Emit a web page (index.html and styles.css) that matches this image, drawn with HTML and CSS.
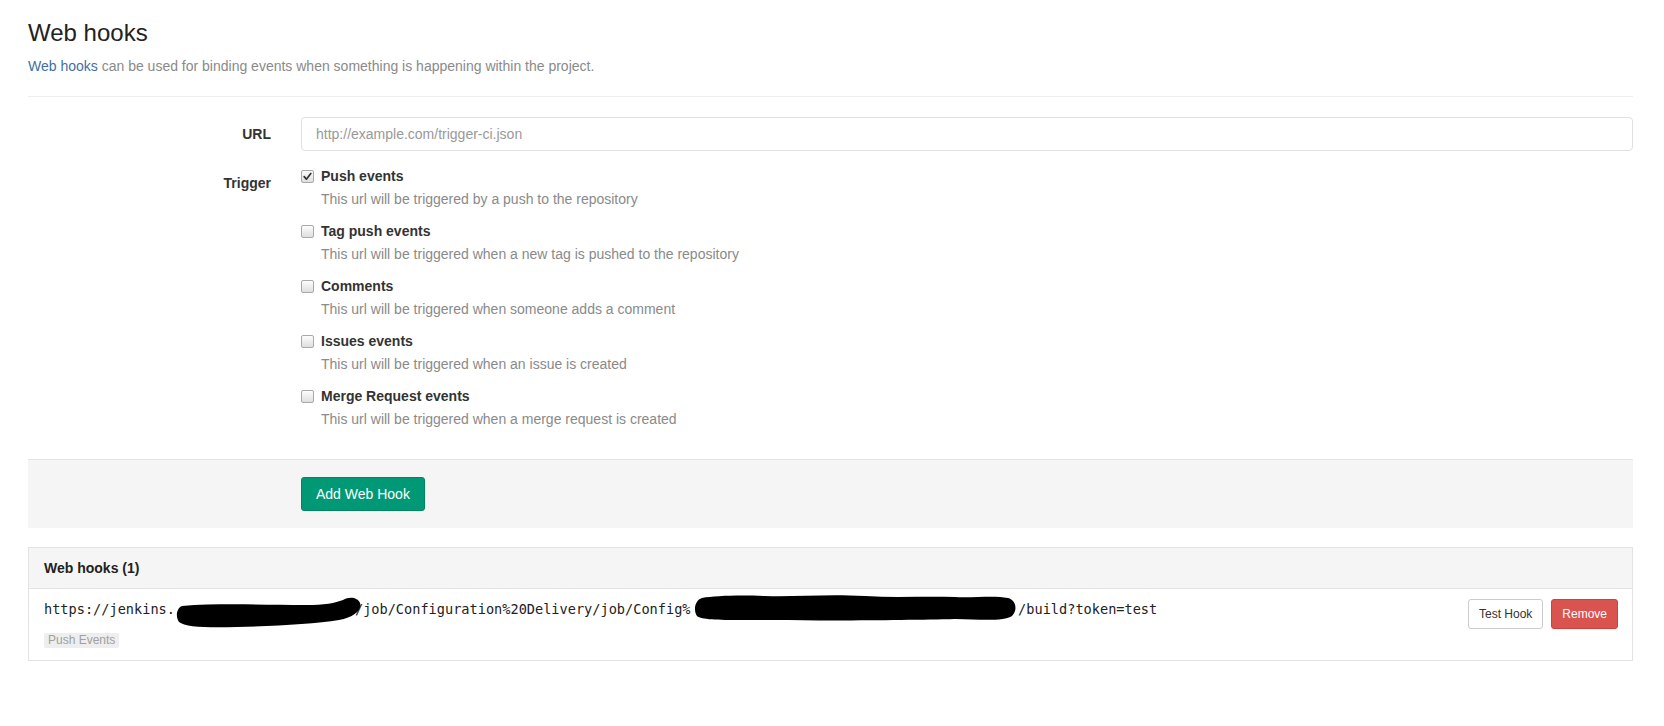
FILE: index.html
```html
<!DOCTYPE html>
<html>
<head>
<meta charset="utf-8">
<link rel="stylesheet" href="styles.css">
</head>
<body>
<div class="page">
  <h3 class="page-title">Web hooks</h3>
  <p class="lead-text"><a href="#" class="link">Web hooks</a> can be used for binding events when something is happening within the project.</p>
  <hr class="divider">

  <form class="hook-form">
    <div class="form-row">
      <label class="form-label">URL</label>
      <div class="form-field">
        <input class="text-input" type="text" placeholder="http://example.com/trigger-ci.json">
      </div>
    </div>
    <div class="form-row trigger-row">
      <label class="form-label">Trigger</label>
      <div class="form-field triggers">
        <div class="trigger">
          <div class="trigger-title"><span class="cb checked"><svg viewBox="0 0 13 13" width="13" height="13"><path d="M3.2 6.6 L5.4 9.2 L9.8 3.4" fill="none" stroke="#333" stroke-width="1.7" stroke-linecap="round" stroke-linejoin="round"/></svg></span><strong>Push events</strong></div>
          <p class="trigger-desc">This url will be triggered by a push to the repository</p>
        </div>
        <div class="trigger">
          <div class="trigger-title"><span class="cb"></span><strong>Tag push events</strong></div>
          <p class="trigger-desc">This url will be triggered when a new tag is pushed to the repository</p>
        </div>
        <div class="trigger">
          <div class="trigger-title"><span class="cb"></span><strong>Comments</strong></div>
          <p class="trigger-desc">This url will be triggered when someone adds a comment</p>
        </div>
        <div class="trigger">
          <div class="trigger-title"><span class="cb"></span><strong>Issues events</strong></div>
          <p class="trigger-desc">This url will be triggered when an issue is created</p>
        </div>
        <div class="trigger">
          <div class="trigger-title"><span class="cb"></span><strong>Merge Request events</strong></div>
          <p class="trigger-desc">This url will be triggered when a merge request is created</p>
        </div>
      </div>
    </div>
    <div class="form-actions">
      <button type="button" class="btn btn-create">Add Web Hook</button>
    </div>
  </form>

  <div class="panel">
    <div class="panel-heading">Web hooks (1)</div>
    <div class="hook-row">
      <div class="hook-info">
        <div class="hook-url">https://jenkins.<span class="redact r1"><svg width="188" height="32" viewBox="0 0 188 32"><path d="M7 9 C2 11 0 19 4 25 C10 30 32 31 62 30 C102 29 140 27 164 23 C179 20 187 13 185 6 C183 1 175 -1 168 3 C160 6 150 8 130 8 C92 8 44 6 7 9 Z" fill="#000"/></svg></span>/job/Configuration%20Delivery/job/Config%<span class="redact r2"><svg width="326" height="28" viewBox="0 0 326 28"><path d="M9 4 C2 6 0 16 4 22 C10 27 40 26 80 26 C150 27 220 26 262 25 C292 26 312 27 319 22 C325 16 323 6 315 4 C301 1 281 4 262 3 C232 2 202 4 172 2 C132 0 102 3 72 2 C42 1 22 2 9 4 Z" fill="#000"/></svg></span>/build?token=test</div>
        <span class="tag-label">Push Events</span>
      </div>
      <div class="hook-actions">
        <button type="button" class="btn-small btn-white">Test Hook</button>
        <button type="button" class="btn-small btn-remove">Remove</button>
      </div>
    </div>
  </div>
</div>
</body>
</html>
```
FILE: styles.css
```css
* { box-sizing: border-box; }
html, body {
  margin: 0;
  padding: 0;
  background: #fff;
}
body {
  font-family: "Liberation Sans", Arial, sans-serif;
  font-size: 14px;
  line-height: 20px;
  color: #333;
}
.page {
  padding: 0 31px 0 28px;
}
.page-title {
  margin: 20px 0 10px;
  font-size: 24px;
  line-height: 26px;
  font-weight: 400;
  color: #222;
}
.lead-text {
  margin: 0;
  color: #8a8a8a;
}
.link {
  color: #3f6fa3;
  text-decoration: none;
}
.divider {
  margin: 20px 0;
  border: 0;
  border-top: 1px solid #eee;
  height: 0;
}
.hook-form { margin: 0; }
.form-row {
  display: grid;
  grid-template-columns: 243px 1fr;
  column-gap: 30px;
}
.trigger-row { margin-top: 15px; }
.form-label {
  text-align: right;
  font-weight: 700;
  padding-top: 7px;
  color: #333;
}
.text-input {
  display: block;
  width: 100%;
  height: 34px;
  padding: 0 14px;
  border: 1px solid #e0e0e0;
  border-radius: 4px;
  font-family: "Liberation Sans", Arial, sans-serif;
  font-size: 14px;
  color: #333;
  background: #fff;
  outline: none;
}
.text-input::placeholder { color: #999; }
.triggers {
  display: flex;
  flex-direction: column;
  gap: 12px;
}
.trigger-title {
  display: flex;
  align-items: center;
  gap: 7px;
  height: 20px;
  font-weight: 700;
  color: #333;
}
.cb {
  display: inline-block;
  width: 13px;
  height: 13px;
  border: 1px solid #a9a9a9;
  border-radius: 2px;
  background: linear-gradient(#fdfdfd, #dedede);
  position: relative;
  flex: none;
}
.cb svg {
  position: absolute;
  left: -1px;
  top: -1px;
}
.trigger-desc {
  margin: 3px 0 0;
  padding-left: 20px;
  color: #8a8a8a;
}
.form-actions {
  margin-top: 30px;
  background: #f5f5f5;
  border-top: 1px solid #e5e5e5;
  padding: 17px 0 17px 273px;
}
.btn {
  font-family: "Liberation Sans", Arial, sans-serif;
  font-size: 14px;
  line-height: 20px;
  height: 34px;
  padding: 6px 14px;
  border-radius: 3px;
  cursor: pointer;
}
.btn-create {
  background: #019875;
  border: 1px solid #01875f;
  color: #fff;
}
.panel {
  margin-top: 19px;
  border: 1px solid #e3e3e3;
}
.panel-heading {
  background: #f5f5f5;
  border-bottom: 1px solid #e3e3e3;
  padding: 10px 15px;
  font-weight: 700;
  color: #222;
}
.hook-row {
  display: flex;
  justify-content: space-between;
  align-items: flex-start;
  padding: 10px 14px 12px 15px;
}
.hook-info {
  display: flex;
  flex-direction: column;
  align-items: flex-start;
}
.hook-url {
  font-family: "DejaVu Sans Mono", "Liberation Mono", monospace;
  font-size: 13.6px;
  line-height: 20px;
  height: 20px;
  color: #222;
  white-space: nowrap;
}
.redact {
  display: inline-block;
  position: relative;
  height: 20px;
  vertical-align: top;
}
.redact svg {
  position: absolute;
}
.r1 { width: 180px; }
.r1 svg { left: 0; top: -2px; }
.r2 { width: 327.6px; }
.r2 svg { left: 2px; top: -5px; }
.tag-label {
  margin-top: 14px;
  display: inline-block;
  font-size: 12px;
  line-height: 15px;
  padding: 0 4px;
  background: #eeeeee;
  color: #a0a0a0;
  border-radius: 2px;
}
.hook-actions {
  display: flex;
  gap: 8px;
}
.btn-small {
  font-family: "Liberation Sans", Arial, sans-serif;
  font-size: 12px;
  line-height: 18px;
  height: 30px;
  padding: 5px 10px;
  border-radius: 3px;
  cursor: pointer;
}
.btn-white {
  background: #fff;
  border: 1px solid #ccc;
  color: #333;
}
.btn-remove {
  background: #d9534f;
  border: 1px solid #d43f3a;
  color: #fff;
}
```
